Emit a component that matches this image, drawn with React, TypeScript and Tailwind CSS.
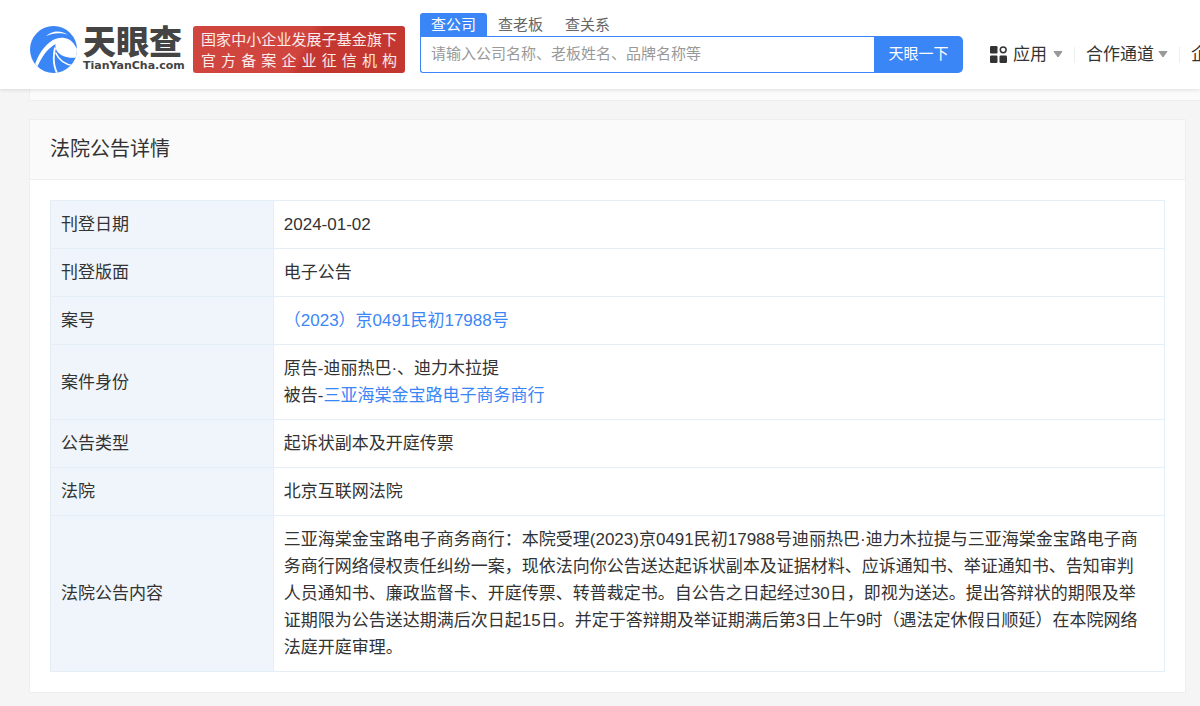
import type { ReactNode } from "react";

const tabs = ["查公司", "查老板", "查关系"];

const rows: { label: string; value: ReactNode }[] = [
  { label: "刊登日期", value: "2024-01-02" },
  { label: "刊登版面", value: "电子公告" },
  {
    label: "案号",
    value: (
      <a href="#case" className="text-[#3b86f6]">
        （2023）京0491民初17988号
      </a>
    ),
  },
  {
    label: "案件身份",
    value: (
      <>
        <p>原告-迪丽热巴·、迪力木拉提</p>
        <p>
          被告-
          <a href="#company" className="text-[#3b86f6]">
            三亚海棠金宝路电子商务商行
          </a>
        </p>
      </>
    ),
  },
  { label: "公告类型", value: "起诉状副本及开庭传票" },
  { label: "法院", value: "北京互联网法院" },
  {
    label: "法院公告内容",
    value:
      "三亚海棠金宝路电子商务商行：本院受理(2023)京0491民初17988号迪丽热巴·迪力木拉提与三亚海棠金宝路电子商务商行网络侵权责任纠纷一案，现依法向你公告送达起诉状副本及证据材料、应诉通知书、举证通知书、告知审判人员通知书、廉政监督卡、开庭传票、转普裁定书。自公告之日起经过30日，即视为送达。提出答辩状的期限及举证期限为公告送达期满后次日起15日。并定于答辩期及举证期满后第3日上午9时（遇法定休假日顺延）在本院网络法庭开庭审理。",
  },
];

function LogoMark() {
  return (
    <svg viewBox="0 0 46 46" className="size-[47px] shrink-0" aria-hidden="true">
      <defs>
        <clipPath id="disc">
          <circle cx="23" cy="23" r="23" />
        </clipPath>
      </defs>
      <g clipPath="url(#disc)">
        <rect width="46" height="46" fill="#3b86f6" />
        <path d="M15.500 10C21 5 29 3.500 37 8.500C29 6 22 7 15.500 10Z" fill="#fff" />
        <path
          d="M4 41C7 29 14 19 22 14C29 10 39 10.500 44 19L47 24L47 30.500C39 32.500 30 30 26 24C25 22 24.500 20 25 17.500C17 22 11 30 6 43Z"
          fill="#fff"
        />
        <path d="M24.500 21C22.500 30 22.500 39 27 47" fill="none" stroke="#fff" strokeWidth="1.800" />
        <path d="M25 26C28 33 34 38 43 39" fill="none" stroke="#fff" strokeWidth="1.500" />
      </g>
    </svg>
  );
}

function Caret() {
  return (
    <svg viewBox="0 0 10 7" className="h-[7px] w-[10px] shrink-0" aria-hidden="true">
      <path d="M1 0.500H9L5 6Z" fill="#999" stroke="#999" strokeLinejoin="round" />
    </svg>
  );
}

function AppsIcon() {
  return (
    <svg viewBox="0 0 17 17" className="size-[17px] shrink-0" fill="#333" aria-hidden="true">
      <rect x="0" y="0" width="7.500" height="7.500" rx="1.200" />
      <rect x="0" y="9.500" width="7.500" height="7.500" rx="1.200" />
      <rect x="9.500" y="9.500" width="7.500" height="7.500" rx="1.200" />
      <circle cx="13.200" cy="3.800" r="2.900" fill="none" stroke="#333" strokeWidth="1.500" />
    </svg>
  );
}

function Header() {
  return (
    <header className="flex h-[89px] items-end overflow-hidden bg-white pb-4 pl-[30px]">
      <a href="#home" className="flex shrink-0 items-center gap-[6px]">
        <LogoMark />
        <span className="flex w-[110px] flex-col text-[#444]">
          <span className="text-[33px] leading-[33px] font-black">天眼查</span>
          <span className="font-['DejaVu_Sans'] text-[11px] leading-[14px] font-bold">
            TianYanCha.com
          </span>
        </span>
      </a>
      <div className="flex h-[47px] w-[212px] shrink-0 flex-col justify-center rounded-[3px] bg-linear-120 from-[#d1453f] from-50% to-[#c43730] to-55% px-2 text-[15px] leading-[21px] text-white/90">
        <p className="[text-align-last:justify] whitespace-nowrap">国家中小企业发展子基金旗下</p>
        <p className="[text-align-last:justify]">官方备案企业征信机构</p>
      </div>
      <form className="ml-[15px] w-[543px] shrink-0" onSubmit={(e) => e.preventDefault()}>
        <div className="flex text-[15px] leading-[23px] text-[#666]">
          {tabs.map((tab, i) => (
            <button
              key={tab}
              type="button"
              className={i === 0 ? "rounded-t-[3px] bg-[#3b86f6] px-[11px] text-white" : "px-[11px]"}
            >
              {tab}
            </button>
          ))}
        </div>
        <div className="flex h-[37px]">
          <input
            aria-label="搜索公司"
            placeholder="请输入公司名称、老板姓名、品牌名称等"
            className="min-w-0 flex-1 rounded-bl-[3px] border border-r-0 border-[#3b86f6] bg-white px-[10px] text-[15px] outline-none placeholder:text-[#999]"
          />
          <button type="submit" className="w-[89px] rounded-r-[5px] bg-[#3b86f6] text-[15px] text-white">
            天眼一下
          </button>
        </div>
      </form>
      <nav className="ml-[27px] flex h-[37px] min-w-0 flex-1 items-center overflow-hidden text-[17px] whitespace-nowrap text-[#333]">
        <a href="#apps" className="flex shrink-0 items-center gap-[6px]">
          <AppsIcon />
          应用
          <Caret />
        </a>
        <span className="mx-[11px] h-4 w-px shrink-0 bg-[#eee]" />
        <a href="#partner" className="flex shrink-0 items-center gap-1">
          合作通道
          <Caret />
        </a>
        <span className="mx-[11px] h-4 w-px shrink-0 bg-[#eee]" />
        <a href="#enterprise" className="shrink-0">
          企
        </a>
      </nav>
    </header>
  );
}

export default function App() {
  return (
    <div className="min-h-screen bg-[#f5f5f5] font-['Liberation_Sans','Noto_Sans_CJK_SC',sans-serif] text-[#333]">
      <div className="relative z-10 shadow-[0_1px_4px_rgba(0,0,0,0.12)]">
        <Header />
      </div>
      <div className="ml-[29px] h-3 border-b border-l border-[#eee] bg-[#fbfbfb]" />
      <main className="pt-[18px] pr-[14px] pb-[13px] pl-[29px]">
        <section className="border border-[#efefef] bg-white">
          <h1 className="border-b border-[#eee] bg-[#fafafa] px-5 py-4 text-[20px] leading-[27px]">
            法院公告详情
          </h1>
          <div className="p-5">
            <table className="w-full border-collapse text-left text-[17px] leading-[27px]">
              <tbody>
                {rows.map((row) => (
                  <tr key={row.label}>
                    <th
                      scope="row"
                      className="w-1/5 border border-[#e4eef6] bg-[#eff5fa] px-[10px] py-[10px] font-normal"
                    >
                      {row.label}
                    </th>
                    <td className="border border-[#e4eef6] py-[10px] pr-[22px] pl-[10px]">{row.value}</td>
                  </tr>
                ))}
              </tbody>
            </table>
          </div>
        </section>
      </main>
    </div>
  );
}
